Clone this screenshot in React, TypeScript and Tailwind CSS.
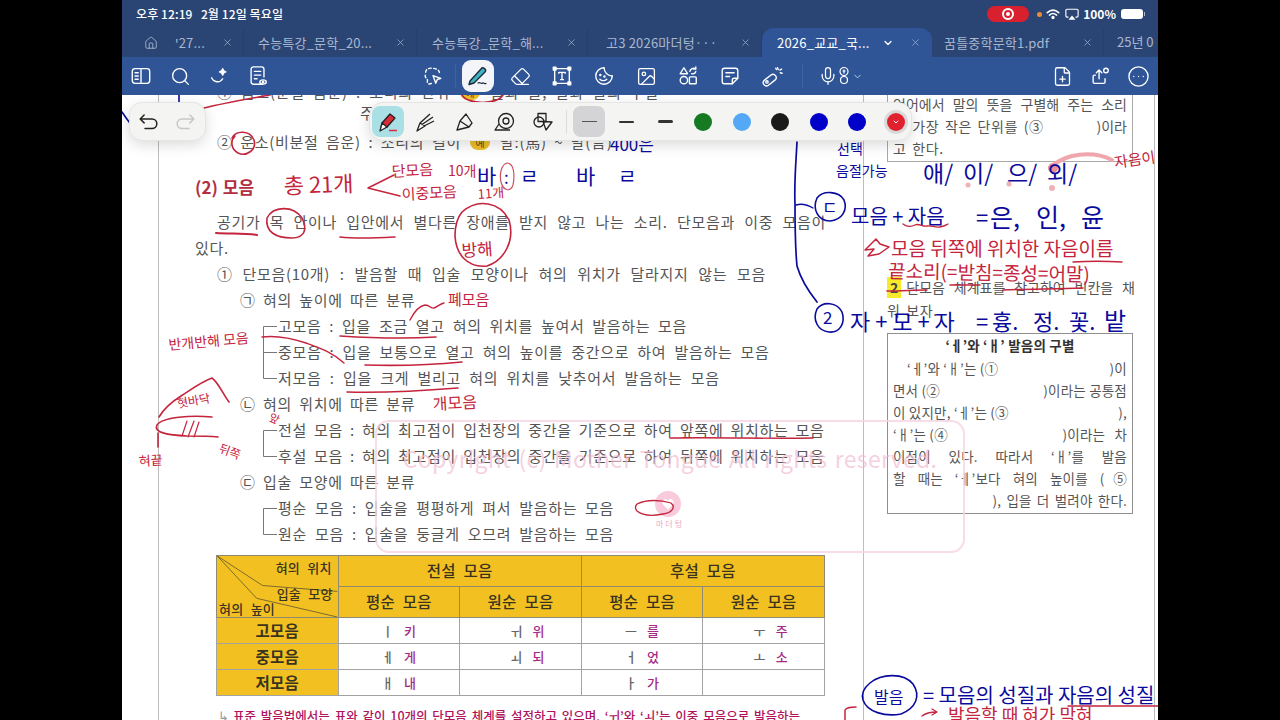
import { ReactNode } from 'react';
import { ChevronDown, CircleEllipsis, Eraser, FilePlus, House, Image, Mic, Search, X } from 'lucide-react';

const RED = '#c4243c';
const BLUE = '#0a0a9c';

function Ink({ x, y, size, color = RED, rot = 0, children }: { x: number; y: number; size: number; color?: string; rot?: number; children: ReactNode }) {
  return <text x={x} y={y} fontSize={size} fill={color} transform={`rotate(${rot} ${x} ${y})`}>{children}</text>;
}

function Stroke({ d, color = RED, w = 1.6, opacity = 1 }: { d: string; color?: string; w?: number; opacity?: number }) {
  return <path d={d} fill="none" stroke={color} strokeWidth={w} strokeOpacity={opacity} strokeLinecap="round" strokeLinejoin="round" />;
}

function Tab({ label, className, active, home }: { label: string; className: string; active?: boolean; home?: boolean }) {
  return <div className={`flex h-full shrink-0 items-center ${className} ${active ? 'rounded-t-xl bg-[#2f5597] pr-[11px] text-white' : 'border-r border-[#25406d] pr-[10px] text-[#a9b8d0]'}`}>
    {home && <House className="mr-[17px] h-[14px] w-[14px] shrink-0 text-[#a9b8d0]" strokeWidth={1.5} />}
    <span className="min-w-0 flex-1 truncate whitespace-pre text-[13px] tracking-[0.2px]">{label}</span>
    {active && <ChevronDown className="mr-[16px] h-[12px] w-[12px] text-white" strokeWidth={2.5} />}
    <X className="h-[11px] w-[11px] shrink-0 text-[#a9b8d0]" strokeWidth={1.5} />
  </div>;
}

function Tool({ children, className = '' }: { children: ReactNode; className?: string }) {
  return <div className={`flex h-[32px] w-[32px] shrink-0 items-center justify-center text-white ${className}`}>{children}</div>;
}

const iconProps = { width: 22, height: 22, viewBox: '0 0 24 24', fill: 'none', stroke: 'currentColor', strokeWidth: 1.5, strokeLinecap: 'round' as const, strokeLinejoin: 'round' as const };

function TopToolbar() {
  return <div className="flex h-[38px] shrink-0 items-center bg-[#2f5597] pl-[3px] pr-[4px]">
    <div className="flex w-[292px] shrink-0 items-center gap-[7px]">
      <Tool><svg {...iconProps}><rect x="2.5" y="4" width="19" height="16" rx="3" /><path d="M12 4v16M5.5 8.5h3.5M5.5 12h3.5M5.5 15.500h3.500" /></svg></Tool>
      <Tool><Search className="h-[21px] w-[21px]" strokeWidth={1.5} /></Tool>
      <Tool><svg {...iconProps}><path d="M4 14c2 5 9 6 12 1" /><path d="M16 4c.4 2.400 1 3 3.500 3.500C17 8 16.400 8.600 16 11c-.4-2.400-1-3-3.500-3.500C15 7 15.600 6.400 16 4z" fill="currentColor" /></svg></Tool>
      <Tool><svg {...iconProps}><path d="M17 21H7a2.500 2.500 0 0 1-2.500-2.500v-14A2.500 2.500 0 0 1 7 2h9a2.500 2.500 0 0 1 2.500 2.500V13" /><path d="M8 7h7M8 11h7M8 15h3" /><ellipse cx="17.500" cy="18.500" rx="3.500" ry="2.300" /><circle cx="17.500" cy="18.500" r=".8" /></svg></Tool>
    </div>
    <div className="flex items-center gap-[10px]">
      <Tool><svg {...iconProps}><path d="M4 8c0-3 3-5 7-4.500 4 .3 8 1.500 8 5" strokeDasharray="3 2.500" /><path d="M3.500 11c-.5 3 2 3.500 2.500 5.500 0 2-1 3 1 4 1.500.5 3 0 4-1" strokeDasharray="3 2.500" /><path d="M12 11.500l8.500 3-3.800 1.300L15 20z" /></svg></Tool>
      <div className="-mx-[4px] h-[24px] w-px bg-[#3d639f]" />
      <div className="flex h-[32px] w-[32px] shrink-0 items-center justify-center rounded-[9px] bg-[#f3f5f9]">
        <svg width="24" height="24" viewBox="0 0 24 24" fill="none"><path d="M4 17L15 5a2.500 2.500 0 0 1 4 3L8 19l-5 1.500z" fill="#3fb5c4" stroke="#1c2a3a" strokeWidth="1.400" strokeLinejoin="round" /><path d="M12 19c2-1.500 3 1.500 4.500 0 1-1 2 1.500 3.500 0.500" stroke="#1c2a3a" strokeWidth="1.200" strokeLinecap="round" /></svg>
      </div>
      <Tool><Eraser className="h-[21px] w-[21px]" strokeWidth={1.5} /></Tool>
      <Tool><svg {...iconProps}><rect x="4" y="4" width="16" height="16" /><path d="M8.500 9V8h7v1M12 8v8M10.500 16h3" /><rect x="2.500" y="2.500" width="3" height="3" fill="currentColor" /><rect x="18.500" y="2.500" width="3" height="3" fill="currentColor" /><rect x="2.500" y="18.500" width="3" height="3" fill="currentColor" /><rect x="18.500" y="18.500" width="3" height="3" fill="currentColor" /></svg></Tool>
      <Tool><svg {...iconProps}><path d="M12 3a9 9 0 1 0 9 9" /><path d="M12 3c.5 5 4 8.500 9 9" /><path d="M7.500 15.500c2 2 5.500 2 7.500 0" /><circle cx="8" cy="11" r=".6" fill="currentColor" /><circle cx="12.500" cy="12.500" r=".6" fill="currentColor" /></svg></Tool>
      <Tool><Image className="h-[21px] w-[21px]" strokeWidth={1.5} /></Tool>
      <Tool><svg {...iconProps}><path d="M7.500 3l4 6.500h-8z" /><circle cx="7.500" cy="16.500" r="4" /><rect x="13.500" y="13" width="7.500" height="7.500" rx="1" /><path d="M14 7c.5-3 4-4.500 6.500-2.500M20.500 2v2.500H18M20.500 7c-.5 2-2.500 3-4.500 2.500" /></svg></Tool>
      <Tool><svg {...iconProps}><path d="M14.500 20.500H6a2.500 2.500 0 0 1-2.500-2.500V6A2.500 2.500 0 0 1 6 3.500h12A2.500 2.500 0 0 1 20.500 6v8.500z" /><path d="M14.500 20.500v-4a2 2 0 0 1 2-2h4M7.500 8.500h9M7.500 12.500h4" /></svg></Tool>
      <Tool><svg {...iconProps}><rect x="1.500" y="13" width="16" height="7" rx="3.500" transform="rotate(-38 9.500 16.500)" /><circle cx="6.500" cy="18.500" r="1.300" /><path d="M18 3l.8 2M22.500 4.500l-2 1M23 9l-2-.5M16 3.500l1 1.500" /></svg></Tool>
      <div className="ml-[4px] mr-[5px] h-[24px] w-px bg-[#3d639f]" />
      <div className="flex items-center text-white">
        <Mic className="h-[20px] w-[20px]" strokeWidth={1.5} />
        <svg width="12" height="20" viewBox="0 0 12 20" fill="none" stroke="currentColor" strokeWidth="1.200"><circle cx="6" cy="5.500" r="4" /><path d="M6 3.500v4M4.500 5h3" /><circle cx="6" cy="14" r="3.500" /></svg>
        <ChevronDown className="ml-[2px] h-[11px] w-[11px] text-[#c6d2e6]" strokeWidth={2} />
      </div>
    </div>
    <div className="ml-auto flex items-center gap-[6px]">
      <Tool><FilePlus className="h-[21px] w-[21px]" strokeWidth={1.5} /></Tool>
      <Tool><svg {...iconProps}><path d="M7 11H6a1.500 1.500 0 0 0-1.500 1.500v6A1.500 1.500 0 0 0 6 20h10a1.500 1.500 0 0 0 1.500-1.500V15" /><path d="M11 15V6M8 8.500l3-3 3 3" /><circle cx="18.500" cy="6" r="2.500" /></svg></Tool>
      <Tool><CircleEllipsis className="h-[23px] w-[23px]" strokeWidth={1.4} /></Tool>
    </div>
  </div>;
}

function Line({ className = '', children }: { className?: string; children: ReactNode }) {
  return <div className={`flex h-[26px] shrink-0 items-center whitespace-pre ${className}`}>{children}</div>;
}

function Bracket({ rows }: { rows: 2 | 3 }) {
  return rows === 3
    ? <svg width="16" height="78" className="shrink-0" fill="none" stroke="#777"><path d="M15 13.500H1.500v52H15M1.500 39.500H15" /></svg>
    : <svg width="16" height="52" className="shrink-0" fill="none" stroke="#777"><path d="M15 13.500H1.500v26H15" /></svg>;
}

function VowelCell({ vowel, word, wide }: { vowel?: string; word?: string; wide?: boolean }) {
  return <td className="border border-[#a3a3a3] bg-white">
    {vowel && <div className={`flex items-center justify-center gap-[10px] ${wide ? 'pl-[14px]' : ''}`}>
      <span className="text-[13px] text-[#666]">{vowel}</span>
      <span className="text-[13px] font-medium text-[#a52a86]">{word}</span>
    </div>}
  </td>;
}

function VowelTable() {
  return <table className="ml-[57px] mt-[8px] h-[141px] w-[609px] shrink-0 table-fixed border-collapse text-center text-[15.500px] font-medium tracking-[0.2px] text-[#3a3320]">
    <tbody>
      <tr className="h-[31px] bg-[#f2c121]">
        <td rowSpan={2} className="relative border border-[#8f8a70] p-0">
          <svg className="absolute inset-0 h-full w-full" viewBox="0 0 122 62" fill="none" stroke="#5c5330" strokeWidth=".8"><path d="M0 0L46 30 122 36M0 0L40 43 122 62" /></svg>
          <span className="absolute right-[6px] top-[4px] text-[13px] leading-4">혀의 위치</span>
          <span className="absolute right-[5px] top-[30px] text-[13px] leading-4">입술 모양</span>
          <span className="absolute bottom-[0px] left-[2px] text-[13px] leading-4">혀의 높이</span>
        </td>
        <td colSpan={2} className="border border-[#8f8a70]">전설 모음</td>
        <td colSpan={2} className="border border-[#8f8a70]">후설 모음</td>
      </tr>
      <tr className="h-[31px] bg-[#f2c121]">
        <td className="border border-[#8f8a70]">평순 모음</td><td className="border border-[#8f8a70]">원순 모음</td>
        <td className="border border-[#8f8a70]">평순 모음</td><td className="border border-[#8f8a70]">원순 모음</td>
      </tr>
      <tr className="h-[26px]"><td className="border border-[#a3a3a3] bg-[#f2c121] font-semibold">고모음</td><VowelCell vowel="ㅣ" word="키" /><VowelCell vowel="ㅟ" word="위" wide /><VowelCell vowel="ㅡ" word="를" /><VowelCell vowel="ㅜ" word="주" wide /></tr>
      <tr className="h-[26px]"><td className="border border-[#a3a3a3] bg-[#f2c121] font-semibold">중모음</td><VowelCell vowel="ㅔ" word="게" /><VowelCell vowel="ㅚ" word="되" wide /><VowelCell vowel="ㅓ" word="었" /><VowelCell vowel="ㅗ" word="소" wide /></tr>
      <tr className="h-[26px]"><td className="border border-[#a3a3a3] bg-[#f2c121] font-semibold">저모음</td><VowelCell vowel="ㅐ" word="내" /><VowelCell /><VowelCell vowel="ㅏ" word="가" /><VowelCell /></tr>
    </tbody>
  </table>;
}

function MainColumn() {
  return <div className="flex w-[706px] shrink-0 flex-col border-x border-[#bdbdbd] text-[15px] tracking-[0.7px] text-[#555] [word-spacing:4.200px]">
    <Line className="-mt-[16px] pl-[58px]">① 음소(분절 음운) : 소리의 단위 <span className="mx-[2px] flex h-[16px] w-[20px] items-center justify-center rounded-full bg-[#eebf2a] text-[10px] text-[#5b4a10]">예</span> 물과 불, 달과 딸의 구별</Line>
    <Line className="-mt-[5px] pl-[201px]">주</Line>
    <Line className="mt-[3px] pl-[58px] [word-spacing:3.500px]">② 운소(비분절 음운) : 소리의 길이 <span className="mx-[2px] flex h-[16px] w-[20px] items-center justify-center rounded-full bg-[#eebf2a] text-[10px] text-[#5b4a10]">예</span> 말:(馬) ~ 말(言)</Line>
    <Line className="mt-[19px] pl-[36px] text-[17px] font-bold tracking-normal text-[#b32e40] [word-spacing:1px]">(2) 모음</Line>
    <Line className="mt-[9px] pl-[58px] [word-spacing:5.200px]">공기가 목 안이나 입안에서 별다른 장애를 받지 않고 나는 소리. 단모음과 이중 모음이</Line>
    <Line className="pl-[36px]">있다.</Line>
    <Line className="pl-[58px] [word-spacing:5.700px]">① 단모음(10개) : 발음할 때 입술 모양이나 혀의 위치가 달라지지 않는 모음</Line>
    <Line className="pl-[81px] [word-spacing:3.200px]">㉠ 혀의 높이에 따른 분류</Line>
    <div className="flex shrink-0 pl-[103px]">
      <Bracket rows={3} />
      <div>
        <Line className="[word-spacing:3.800px]">고모음 : 입을 조금 열고 혀의 위치를 높여서 발음하는 모음</Line>
        <Line className="[word-spacing:4px]">중모음 : 입을 보통으로 열고 혀의 높이를 중간으로 하여 발음하는 모음</Line>
        <Line>저모음 : 입을 크게 벌리고 혀의 위치를 낮추어서 발음하는 모음</Line>
      </div>
    </div>
    <Line className="pl-[81px] [word-spacing:3.200px]">㉡ 혀의 위치에 따른 분류</Line>
    <div className="flex shrink-0 pl-[103px]">
      <Bracket rows={2} />
      <div>
        <Line className="[word-spacing:3px]">전설 모음 : 혀의 최고점이 입천장의 중간을 기준으로 하여 앞쪽에 위치하는 모음</Line>
        <Line className="[word-spacing:3px]">후설 모음 : 혀의 최고점이 입천장의 중간을 기준으로 하여 뒤쪽에 위치하는 모음</Line>
      </div>
    </div>
    <Line className="pl-[81px] [word-spacing:3.200px]">㉢ 입술 모양에 따른 분류</Line>
    <div className="flex shrink-0 pl-[103px]">
      <Bracket rows={2} />
      <div>
        <Line className="[word-spacing:3.900px]">평순 모음 : 입술을 평평하게 펴서 발음하는 모음</Line>
        <Line className="[word-spacing:3.900px]">원순 모음 : 입술을 둥글게 오므려 발음하는 모음</Line>
      </div>
    </div>
    <VowelTable />
    <Line className="mt-[7px] pl-[59px] text-[12.500px] font-medium tracking-normal text-[#b0125c] [word-spacing:2px]"><span className="mr-[4px] text-[#999]">↳</span>표준 발음법에서는 표와 같이 10개의 단모음 체계를 설정하고 있으며, ‘ㅟ’와 ‘ㅚ’는 이중 모음으로 발음하는</Line>
  </div>;
}

function BoxLine({ children, className = 'justify-between' }: { children: ReactNode; className?: string }) {
  return <div className={`flex h-[22px] items-center whitespace-pre ${className}`}>{children}</div>;
}

function Filled({ children }: { children: ReactNode }) {
  return <div className="flex h-[22px] items-center"><span className="w-full whitespace-pre-wrap [text-align-last:justify]">{children}</span></div>;
}

function RightColumn() {
  return <div className="flex w-[291px] shrink-0 flex-col border-r border-[#bdbdbd] pl-[23px] text-[14px] text-[#555]">
    <div className="-mt-[2px] w-[246px] border border-t-0 border-[#a8a8a8] px-[5px] pb-[2px]">
      <Filled>언어에서 말의 뜻을 구별해 주는 소리</Filled>
      <BoxLine><span className="tracking-[0.6px] [word-spacing:2px]">는 가장 작은 단위를 (③</span><span>)이라</span></BoxLine>
      <BoxLine className="tracking-[0.6px] [word-spacing:2px]">고 한다.</BoxLine>
    </div>
    <div className="mt-[114px] flex h-[23px] w-[248px] items-center"><span className="mr-[5px] bg-[#f6ea2a] px-[3px] font-bold text-[#444]">2</span><span className="flex-1 [text-align-last:justify]">단모음 체계표를 참고하여 빈칸을 채</span></div>
    <div className="flex h-[23px] items-center tracking-[0.6px] [word-spacing:2px]">워 보자.</div>
    <div className="mt-[11px] w-[246px] border border-[#8f8f8f] px-[5px] pb-[2px] text-[13.500px] tracking-[0.2px]">
      <div className="flex h-[23px] items-center justify-center whitespace-pre text-[13.500px] font-semibold text-[#333]">‘ㅔ’와 ‘ㅐ’ 발음의 구별</div>
      <BoxLine><span className="pl-[14px]">‘ㅔ’와 ‘ㅐ’는 (①</span><span>)이</span></BoxLine>
      <BoxLine><span>면서 (②</span><span>)이라는 공통점</span></BoxLine>
      <BoxLine><span>이 있지만, ‘ㅔ’는 (③</span><span>),</span></BoxLine>
      <BoxLine><span>‘ㅐ’는 (④</span><span className="[word-spacing:6px]">)이라는 차</span></BoxLine>
      <Filled>이점이 있다. 따라서 ‘ㅐ’를 발음</Filled>
      <Filled>할 때는 ‘ㅔ’보다 혀의 높이를 (⑤</Filled>
      <BoxLine className="justify-end [word-spacing:2px]">), 입을 더 벌려야 한다.</BoxLine>
    </div>
  </div>;
}

function Annotations() {
  return <svg className="absolute inset-0 h-full w-full" viewBox="122 95 1036 625">
    <Stroke d="M204 108c20-5 44-9 66-13" />
    <Stroke d="M462 95c6 10 35 10 41 0" />
    <Stroke d="M179 95v8M122 112c4 6 8 12 14 18" color={BLUE} />
    <Stroke d="M232 138c4-8 18-8 22 2 3 10-8 17-16 13-7-4-8-12-3-17" />
    <Ink x={610} y={151} size={17} color={BLUE}>400은</Ink>
    <Ink x={284} y={194} size={22} rot={-2}>총 21개</Ink>
    <Stroke d="M394 175l-26 13 32 8" w={1.500} />
    <Ink x={392} y={177} size={15} rot={-3}>단모음</Ink>
    <Ink x={448} y={176} size={14}>10개</Ink>
    <Ink x={402} y={200} size={15} rot={-3}>이중모음</Ink>
    <Ink x={478} y={199} size={13} rot={-4}>11개</Ink>
    <Ink x={477} y={184} size={21} color={BLUE}>바</Ink>
    <Stroke d="M507 163c7 0 8 12 6 22-3 8-10 5-12-3-2-9 1-18 6-19z" w={1.200} opacity={.8} />
    <Ink x={504} y={184} size={17} color={BLUE}>:</Ink>
    <Ink x={520} y={184} size={20} color={BLUE}>ㄹ</Ink>
    <Ink x={576} y={184} size={21} color={BLUE}>바</Ink>
    <Ink x={618} y={184} size={20} color={BLUE}>ㄹ</Ink>
    <Stroke d="M216 233c14 1 28 0 41 2" w={2} />
    <Stroke d="M267 218c6-12 26-13 35 0 6 12 2 20-10 20-16 0-27-6-25-20" />
    <Stroke d="M340 237c18 2 36 1 55 0" />
    <Stroke d="M462 212c16-14 38-10 47 8 6 20-4 40-22 46-20 2-31-12-32-30 0-10 2-18 7-24z" />
    <Ink x={462} y={257} size={17} rot={-4}>방해</Ink>
    <Stroke d="M410 320c4-8 9-14 15-15 5 0 6 4 9 3s6-4 10-5" w={1.400} />
    <Ink x={448} y={305} size={15}>폐모음</Ink>
    <Ink x={169} y={350} size={14} rot={-5}>반개반해 모음</Ink>
    <Stroke d="M262 337c16-2 32 2 44 6 14 5 26 9 38 20" w={1.400} />
    <Stroke d="M340 336c32 2 64 3 96 1" />
    <Stroke d="M365 365c32 1 66 0 97-3" />
    <Stroke d="M347 392c38 1 74-1 111-4" />
    <Ink x={433} y={410} size={16} rot={-3}>개모음</Ink>
    <Stroke d="M159 417c6-10 14-16 22-21 11-7 20-14 31-18 6 4 11 16 17 24" />
    <Ink x={178} y={408} size={12} rot={-10}>혓바닥</Ink>
    <Stroke d="M212 417c-20-2-50 0-55 8-4 8 12 10 30 11 12 0 22 0 31 1" />
    <Stroke d="M182 436l5-15M188 437l6-16M194 437l5-15" w={1.200} />
    <Stroke d="M158 433v14" />
    <Ink x={139} y={466} size={13} rot={-3}>혀끝</Ink>
    <Ink x={218} y={452} size={12} rot={20}>뒤쪽</Ink>
    <Ink x={268} y={420} size={11} rot={25}>앞</Ink>
    <Stroke d="M670 438c50-1 97 1 143 0" w={1.400} />
    <Stroke d="M637 504c10-5 24-4 34-1 5 4 1 10-8 11-10 2-20 2-26-3-2-2-2-5 0-7z" w={1.300} />
    <Stroke d="M797 142c-1 20-3 42-2 62 0 20 0 42 2 62 4 14 12 26 20 36" w={1.700} color={BLUE} />
    <Stroke d="M796 205c6-2 12 0 17 3" w={1.400} color={BLUE} />
    <Stroke d="M817 198c6-8 22-7 27 2 4 10-2 20-14 21-12 0-18-12-13-23z" w={1.600} color={BLUE} />
    <Ink x={822} y={214} size={17} color={BLUE}>ㄷ</Ink>
    <Stroke d="M817 309c6-8 20-7 25 3 4 12-3 21-13 20-11-1-17-12-12-23z" w={1.600} color={BLUE} />
    <Ink x={823} y={324} size={17} color={BLUE}>2</Ink>
    <Ink x={837} y={154} size={14} color={BLUE}>선택</Ink>
    <Ink x={836} y={176} size={14} color={BLUE}>음절가능</Ink>
    <Stroke d="M1050 168c6-6 14-10 22-12 14-3 28-2 40 4" color="#f0a6ad" w={4} />
    <circle cx="968" cy="185" r="2.500" fill="#eeb1b8" />
    <circle cx="1009" cy="184" r="2.500" fill="#eeb1b8" />
    <circle cx="1052" cy="188" r="3" fill="#eeb1b8" />
    <circle cx="1053" cy="168" r="5" fill="#ee8e98" />
    <Ink x={923} y={182} size={23} color={BLUE}>애/</Ink>
    <Ink x={963} y={182} size={23} color={BLUE}>이/</Ink>
    <Ink x={1007} y={182} size={23} color={BLUE}>으/</Ink>
    <Ink x={1047} y={182} size={23} color={BLUE}>외/</Ink>
    <Ink x={1115} y={168} size={15} rot={-8}>자음이</Ink>
    <Ink x={851} y={224} size={20} color={BLUE}>모음 + 자음</Ink>
    <Stroke d="M903 224c4 3 8 3 12 1s8 2 12 1 8 2 13 1 6-2 8-3" w={1.300} />
    <Ink x={976} y={226} size={22} color={BLUE}>=</Ink>
    <Ink x={990} y={227} size={25} color={BLUE}>은,</Ink>
    <Ink x={1036} y={227} size={25} color={BLUE}>인,</Ink>
    <Ink x={1081} y={227} size={25} color={BLUE}>윤</Ink>
    <Stroke d="M865 250l11-11 4 5 9 3-10 7-11 2 6-7z" w={1.500} />
    <Ink x={891} y={256} size={19}>모음 뒤쪽에 위치한 자음이름</Ink>
    <Ink x={888} y={278} size={19} rot={1}>끝소리(=받침=종성=어말)</Ink>
    <Stroke d="M1073 262c16-1 32-1 49 0" w={1.400} />
    <Stroke d="M887 291c14 0 27-1 40-1M950 285c10 0 20 0 30 0M1003 290c26-1 54-1 80-2" w={1.600} />
    <Ink x={850} y={330} size={22} color={BLUE}>자 + 모 + 자</Ink>
    <Ink x={976} y={330} size={22} color={BLUE}>=</Ink>
    <Ink x={992} y={330} size={22} color={BLUE}>흉.</Ink>
    <Ink x={1033} y={330} size={22} color={BLUE}>정.</Ink>
    <Ink x={1069} y={330} size={22} color={BLUE}>꽃.</Ink>
    <Ink x={1104} y={330} size={24} color={BLUE}>밭</Ink>
    <Stroke d="M870 683c12-10 34-10 43 1 8 12 3 24-12 30-16 3-34-2-38-14-2-7 2-13 7-17z" w={1.600} color={BLUE} />
    <Ink x={874} y={703} size={16} color={BLUE}>발음</Ink>
    <Ink x={923} y={703} size={20} color={BLUE}>= 모음의 성질과 자음의 성질</Ink>
    <Stroke d="M1068 706c30 0 60 0 90 0" w={1.400} />
    <Stroke d="M856 707c-5 0-10 1-11 3v12" w={1.500} />
    <Stroke d="M922 716c4-3 8-4 14-4M932 709l5 3-5 3" w={1.300} />
    <Ink x={948} y={722} size={18}>발음할 때 혀가 막혀</Ink>
  </svg>;
}

function Watermark() {
  return <div className="absolute left-[253px] top-[325px] flex h-[133px] w-[590px] flex-col items-center rounded-[14px] border-2 border-[#f6d3e2]/80 pt-[20px]">
    <div className="whitespace-pre text-[23px] leading-8 tracking-[0.3px] text-[#f1bcd2]/70 [word-spacing:2px]">Copyright (c) Mother Tongue All rights reserved.</div>
    <div className="ml-[-4px] mt-[17px] flex h-[26px] w-[26px] items-center justify-center rounded-full bg-[#f9c9dc] text-[13px] text-white">♥</div>
    <div className="mt-[1px] text-[8px] leading-3 tracking-[2px] text-[#f1a9c6]">마더텅</div>
  </div>;
}

function FloatingTools() {
  return <>
    <div className="absolute left-[7px] top-[7px] flex h-[39px] w-[77px] items-center justify-between rounded-[13px] border border-[#e5e5e3] bg-[#f4f4f2] pl-[8px] pr-[9px] shadow-[0_4px_14px_rgba(0,0,0,0.14)]">
      <svg width="21" height="18" viewBox="0 0 24 20" fill="none" stroke="#222" strokeWidth="1.700" strokeLinecap="round" strokeLinejoin="round"><path d="M7 2L2.500 6.500 7 11M3 6.500h13a4.500 4.500 0 0 1 0 11H8" /></svg>
      <svg width="21" height="18" viewBox="0 0 24 20" fill="none" stroke="#c7c7c7" strokeWidth="1.700" strokeLinecap="round" strokeLinejoin="round"><path d="M17 2l4.500 4.500L17 11M21 6.500H8a4.500 4.500 0 0 0 0 11h8" /></svg>
    </div>
    <div className="absolute left-[247px] top-[7px] flex h-[39px] w-[543px] items-center rounded-[14px] border border-[#e5e5e3] bg-[#f4f4f2] pl-[2px] shadow-[0_4px_14px_rgba(0,0,0,0.14)]">
      <div className="flex h-[31px] w-[32px] items-center justify-center rounded-[8px] bg-[#abdfe6]">
        <svg width="24" height="24" viewBox="0 0 24 24" fill="none" strokeLinejoin="round"><path d="M6 13L14 4l5 4-8 9-6 1z" fill="#d92c36" stroke="#222" strokeWidth="1.300" /><path d="M4 21l2-8 5 4z" fill="#fff" stroke="#222" strokeWidth="1.300" /><path d="M13 20.500h8" stroke="#d92c36" strokeWidth="1.500" /></svg>
      </div>
      <div className="ml-[10px] flex w-[141px] justify-between text-[#222]">
        <svg width="24" height="24" viewBox="0 0 24 24" fill="none" stroke="currentColor" strokeWidth="1.300" strokeLinejoin="round"><path d="M3 21l3-8 5 3-8 5zM6 13L16 4M8 14.500L19 7M10 16l10-5" /></svg>
        <svg width="24" height="24" viewBox="0 0 24 24" fill="none" stroke="currentColor" strokeWidth="1.300" strokeLinejoin="round"><path d="M4 20l3-9 9 6-12 3zM7 11l6-7 6 9-3 4" /></svg>
        <svg width="24" height="24" viewBox="0 0 24 24" fill="none" stroke="currentColor" strokeWidth="1.300" strokeLinejoin="round"><circle cx="14" cy="11" r="7.500" /><circle cx="14" cy="11" r="3" /><path d="M7 14L3 20h15" /></svg>
        <svg width="24" height="24" viewBox="0 0 24 24" fill="none" stroke="currentColor" strokeWidth="1.300" strokeLinejoin="round"><circle cx="8" cy="12" r="5" /><rect x="7" y="3.500" width="8" height="8" /><path d="M12 11.500l9 .5-6 8z" /></svg>
      </div>
      <div className="ml-[11px] h-[24px] w-px bg-[#dcdcdc]" />
      <div className="ml-[6px] flex h-[31px] w-[32px] items-center justify-center rounded-[8px] bg-[#d4d4d6]"><div className="h-px w-[15px] bg-[#555]" /></div>
      <div className="ml-[14px] h-[2px] w-[15px] rounded bg-[#333]" />
      <div className="ml-[24px] h-[3px] w-[15px] rounded bg-[#333]" />
      <div className="ml-[21px] flex items-center gap-[20.600px]">
        <div className="h-[18px] w-[18px] rounded-full bg-[#157a22]" />
        <div className="h-[18px] w-[18px] rounded-full bg-[#53a9f5]" />
        <div className="h-[18px] w-[18px] rounded-full bg-[#1b1a1a]" />
        <div className="h-[18px] w-[18px] rounded-full bg-[#0000c8]" />
        <div className="h-[18px] w-[18px] rounded-full bg-[#0000c8]" />
        <div className="flex h-[18px] w-[18px] items-center justify-center rounded-full bg-[#e2212f] ring-[3px] ring-[#d9d9d9]"><ChevronDown className="h-[8px] w-[8px] text-white" strokeWidth={3} /></div>
      </div>
    </div>
  </>;
}

export default function App() {
  return <div className="flex h-[720px] w-[1280px] justify-center overflow-hidden bg-black font-['Noto_Sans_CJK_KR','Noto_Sans',sans-serif]">
    <div className="flex w-[1036px] flex-col">
      <div className="flex h-[28px] shrink-0 items-center justify-between bg-[#2a4574] pl-[14px] pr-[13px] text-[12px] font-medium text-white">
        <span className="whitespace-pre tracking-[0.1px]">오후 12:19   2월 12일 목요일</span>
        <div className="flex items-center">
          <div className="flex h-[16px] w-[42px] items-center justify-center rounded-full bg-[#d8202f]"><div className="flex h-[12px] w-[12px] items-center justify-center rounded-full border-2 border-white"><div className="h-[4px] w-[4px] rounded-full bg-white" /></div></div>
          <div className="ml-[8px] h-[5px] w-[5px] rounded-full bg-[#f08a30]" />
          <svg className="ml-[4px]" width="14" height="12" viewBox="0 0 16 12" fill="none" stroke="#fff" strokeWidth="1.800" strokeLinecap="round"><path d="M1.500 4.500c4-3.600 9-3.600 13 0M4 7.200c2.500-2.200 5.500-2.200 8 0" /><circle cx="8" cy="10" r="1" fill="#fff" /></svg>
          <svg className="ml-[5px]" width="14" height="13" viewBox="0 0 16 14" fill="none" stroke="#fff" strokeWidth="1.300"><path d="M4 10H2.500A1.500 1.500 0 0 1 1 8.500v-6A1.500 1.500 0 0 1 2.500 1h11A1.500 1.500 0 0 1 15 2.500v6a1.500 1.500 0 0 1-1.500 1.500H12" /><path d="M8 8l4 5H4z" fill="#fff" stroke="none" /></svg>
          <span className="ml-[4px] font-semibold">100%</span>
          <div className="ml-[5px] h-[10px] w-[22px] rounded-[3px] bg-white" />
          <div className="ml-px h-[4px] w-px bg-[#aeb9cc]" />
        </div>
      </div>
      <div className="flex h-[29px] shrink-0 items-stretch overflow-hidden bg-[#2a4574]">
        <Tab home label="ꞌ27..." className="w-[122px] pl-[22px]" />
        <Tab label="수능특강_문학_20..." className="w-[173px] pl-[14px]" />
        <Tab label="수능특강_문학_해..." className="w-[171px] pl-[15px]" />
        <Tab label="고3 2026마더텅···" className="w-[174px] pl-[18px]" />
        <Tab active label="2026_교교_국..." className="w-[170px] pl-[15px]" />
        <Tab label="꿈틀중학문학1.pdf" className="w-[172px] pl-[12px]" />
        <div className="whitespace-pre pl-[13px] pt-[4px] text-[13px] text-[#a9b8d0]">25년 0</div>
      </div>
      <TopToolbar />
      <div className="relative flex min-h-0 flex-1 overflow-hidden bg-white">
        <div className="w-[36px] shrink-0" />
        <MainColumn />
        <RightColumn />
        <Watermark />
        <Annotations />
        <FloatingTools />
      </div>
    </div>
  </div>;
}
